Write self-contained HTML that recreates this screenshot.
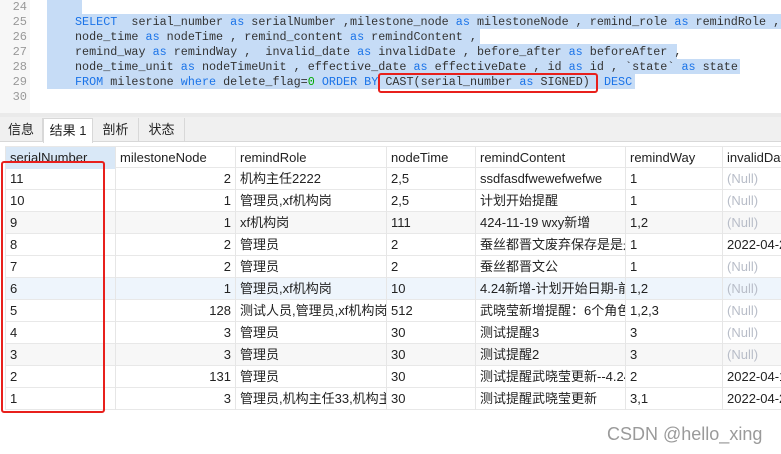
<!DOCTYPE html>
<html><head><meta charset="utf-8"><style>
*{margin:0;padding:0;box-sizing:border-box}
body{width:781px;height:454px;overflow:hidden;background:#fff;position:relative;font-family:"Liberation Sans","Noto Sans CJK SC",sans-serif}
.gut{position:absolute;left:0;top:0;width:30px;height:113px;background:#f7f7f7}
.ln{position:absolute;left:0;width:27px;text-align:right;font:12px "Liberation Mono",monospace;color:#999;height:15px;line-height:15px}
.sel{position:absolute;background:#c6dcf6;height:15px}
.code{position:absolute;left:75px;font:11.75px "Liberation Mono",monospace;color:#333;white-space:pre;height:15px;line-height:15px}
.k{color:#1a73e8}.n{color:#0a0}
.bar{position:absolute;left:0;top:113px;width:781px;height:4px;background:#eaeaea}
.tabs{position:absolute;left:0;top:117px;width:781px;height:25px;background:#f0f0f0;border-bottom:1px solid #d8d8d8}
.tab{position:absolute;top:1px;height:24px;line-height:24px;font-size:13px;color:#222;text-align:center;border-right:1px solid #d8d8d8}
.tab.a{background:#fff;border:1px solid #d8d8d8;border-bottom:none;height:25px}
.row{position:absolute;left:5px;width:776px;height:22px;border-bottom:1px solid #e8e8e8}
.c{position:absolute;top:0;height:22px;line-height:22px;font-size:13px;color:#222;padding-left:4px;white-space:nowrap;overflow:hidden;border-left:1px solid #e6e6e6}
.r{text-align:right;padding-right:4px}
.nl{color:#b8bdc8}
.box{position:absolute;border:2.5px solid #e8201c;border-radius:3px}
</style></head><body>
<div class="gut"></div>
<div class="ln" style="top:0">24</div><div class="ln" style="top:15px">25</div><div class="ln" style="top:30px">26</div><div class="ln" style="top:45px">27</div><div class="ln" style="top:60px">28</div><div class="ln" style="top:75px">29</div><div class="ln" style="top:90px">30</div>
<div class="sel" style="left:47px;top:0;width:35px"></div>
<div class="sel" style="left:47px;top:14px;width:734px"></div>
<div class="sel" style="left:47px;top:29px;width:433px"></div>
<div class="sel" style="left:47px;top:44px;width:630px"></div>
<div class="sel" style="left:47px;top:59px;width:693px"></div>
<div class="sel" style="left:47px;top:74px;width:588px"></div>
<div class="code" style="top:15px"><span class="k">SELECT</span>  serial_number <span class="k">as</span> serialNumber ,milestone_node <span class="k">as</span> milestoneNode , remind_role <span class="k">as</span> remindRole ,</div>
<div class="code" style="top:30px">node_time <span class="k">as</span> nodeTime , remind_content <span class="k">as</span> remindContent ,</div>
<div class="code" style="top:45px">remind_way <span class="k">as</span> remindWay ,  invalid_date <span class="k">as</span> invalidDate , before_after <span class="k">as</span> beforeAfter ,</div>
<div class="code" style="top:60px">node_time_unit <span class="k">as</span> nodeTimeUnit , effective_date <span class="k">as</span> effectiveDate , id <span class="k">as</span> id , `state` <span class="k">as</span> state</div>
<div class="code" style="top:75px"><span class="k">FROM</span> milestone <span class="k">where</span> delete_flag=<span class="n">0</span> <span class="k">ORDER BY</span> CAST(serial_number <span class="k">as</span> SIGNED)  <span class="k">DESC</span></div>
<div class="box" style="left:378px;top:73px;width:220px;height:20px"></div>
<div class="bar"></div>
<div class="tabs">
<div class="tab" style="left:0;width:43px">信息</div>
<div class="tab a" style="left:43px;width:50px">结果 1</div>
<div class="tab" style="left:93px;width:46px">剖析</div>
<div class="tab" style="left:139px;width:46px">状态</div>
</div>
<div class="row" style="top:146px;border-top:1px solid #e8e8e8"><div class="c" style="left:0;width:110px;background:#d9e8f7">serialNumber</div><div class="c" style="left:110px;width:120px">milestoneNode</div><div class="c" style="left:230px;width:151px">remindRole</div><div class="c" style="left:381px;width:89px">nodeTime</div><div class="c" style="left:470px;width:150px">remindContent</div><div class="c" style="left:620px;width:97px">remindWay</div><div class="c" style="left:717px;width:70px">invalidDate</div></div>
<div class="row" style="top:168px"><div class="c" style="left:0;width:110px">11</div><div class="c r" style="left:110px;width:120px">2</div><div class="c" style="left:230px;width:151px">机构主任2222</div><div class="c" style="left:381px;width:89px">2,5</div><div class="c" style="left:470px;width:150px">ssdfasdfwewefwefwe</div><div class="c" style="left:620px;width:97px">1</div><div class="c nl" style="left:717px;width:70px">(Null)</div></div>
<div class="row" style="top:190px"><div class="c" style="left:0;width:110px">10</div><div class="c r" style="left:110px;width:120px">1</div><div class="c" style="left:230px;width:151px">管理员,xf机构岗</div><div class="c" style="left:381px;width:89px">2,5</div><div class="c" style="left:470px;width:150px">计划开始提醒</div><div class="c" style="left:620px;width:97px">1</div><div class="c nl" style="left:717px;width:70px">(Null)</div></div>
<div class="row" style="top:212px;background:#f7f7f7"><div class="c" style="left:0;width:110px">9</div><div class="c r" style="left:110px;width:120px">1</div><div class="c" style="left:230px;width:151px">xf机构岗</div><div class="c" style="left:381px;width:89px">111</div><div class="c" style="left:470px;width:150px">424-11-19 wxy新增</div><div class="c" style="left:620px;width:97px">1,2</div><div class="c nl" style="left:717px;width:70px">(Null)</div></div>
<div class="row" style="top:234px"><div class="c" style="left:0;width:110px">8</div><div class="c r" style="left:110px;width:120px">2</div><div class="c" style="left:230px;width:151px">管理员</div><div class="c" style="left:381px;width:89px">2</div><div class="c" style="left:470px;width:150px">蚕丝都晋文废弃保存是是是</div><div class="c" style="left:620px;width:97px">1</div><div class="c" style="left:717px;width:70px">2022-04-2</div></div>
<div class="row" style="top:256px"><div class="c" style="left:0;width:110px">7</div><div class="c r" style="left:110px;width:120px">2</div><div class="c" style="left:230px;width:151px">管理员</div><div class="c" style="left:381px;width:89px">2</div><div class="c" style="left:470px;width:150px">蚕丝都晋文公</div><div class="c" style="left:620px;width:97px">1</div><div class="c nl" style="left:717px;width:70px">(Null)</div></div>
<div class="row" style="top:278px;background:#eef5fc"><div class="c" style="left:0;width:110px">6</div><div class="c r" style="left:110px;width:120px">1</div><div class="c" style="left:230px;width:151px">管理员,xf机构岗</div><div class="c" style="left:381px;width:89px">10</div><div class="c" style="left:470px;width:150px">4.24新增-计划开始日期-前-</div><div class="c" style="left:620px;width:97px">1,2</div><div class="c nl" style="left:717px;width:70px">(Null)</div></div>
<div class="row" style="top:300px"><div class="c" style="left:0;width:110px">5</div><div class="c r" style="left:110px;width:120px">128</div><div class="c" style="left:230px;width:151px">测试人员,管理员,xf机构岗,机</div><div class="c" style="left:381px;width:89px">512</div><div class="c" style="left:470px;width:150px">武晓莹新增提醒：6个角色、</div><div class="c" style="left:620px;width:97px">1,2,3</div><div class="c nl" style="left:717px;width:70px">(Null)</div></div>
<div class="row" style="top:322px"><div class="c" style="left:0;width:110px">4</div><div class="c r" style="left:110px;width:120px">3</div><div class="c" style="left:230px;width:151px">管理员</div><div class="c" style="left:381px;width:89px">30</div><div class="c" style="left:470px;width:150px">测试提醒3</div><div class="c" style="left:620px;width:97px">3</div><div class="c nl" style="left:717px;width:70px">(Null)</div></div>
<div class="row" style="top:344px;background:#f7f7f7"><div class="c" style="left:0;width:110px">3</div><div class="c r" style="left:110px;width:120px">3</div><div class="c" style="left:230px;width:151px">管理员</div><div class="c" style="left:381px;width:89px">30</div><div class="c" style="left:470px;width:150px">测试提醒2</div><div class="c" style="left:620px;width:97px">3</div><div class="c nl" style="left:717px;width:70px">(Null)</div></div>
<div class="row" style="top:366px"><div class="c" style="left:0;width:110px">2</div><div class="c r" style="left:110px;width:120px">131</div><div class="c" style="left:230px;width:151px">管理员</div><div class="c" style="left:381px;width:89px">30</div><div class="c" style="left:470px;width:150px">测试提醒武晓莹更新--4.24-</div><div class="c" style="left:620px;width:97px">2</div><div class="c" style="left:717px;width:70px">2022-04-1</div></div>
<div class="row" style="top:388px"><div class="c" style="left:0;width:110px">1</div><div class="c r" style="left:110px;width:120px">3</div><div class="c" style="left:230px;width:151px">管理员,机构主任33,机构主任</div><div class="c" style="left:381px;width:89px">30</div><div class="c" style="left:470px;width:150px">测试提醒武晓莹更新</div><div class="c" style="left:620px;width:97px">3,1</div><div class="c" style="left:717px;width:70px">2022-04-2</div></div>
<div class="box" style="left:1px;top:161px;width:104px;height:252px"></div>
<div style="position:absolute;left:607px;top:424px;font-size:18px;color:#9a9a9a">CSDN @hello_xing</div>
</body></html>
